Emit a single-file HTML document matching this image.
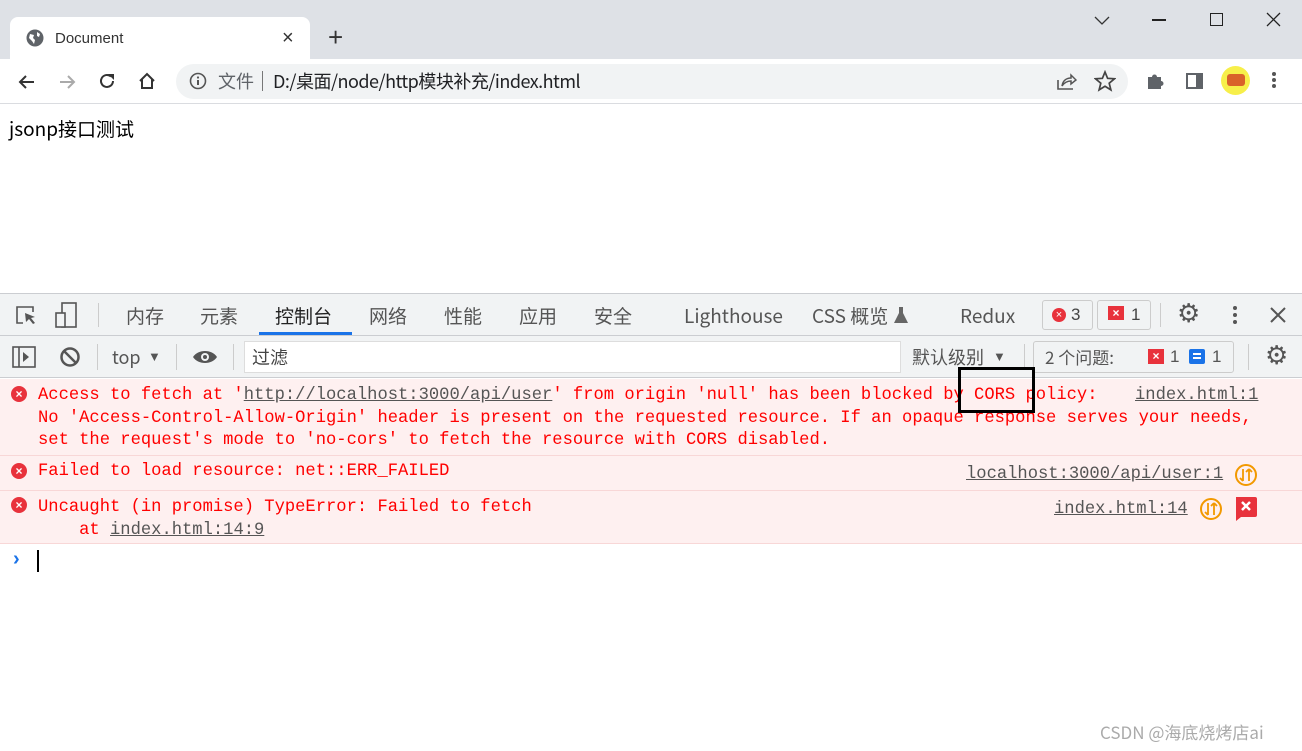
<!DOCTYPE html>
<html><head><meta charset="utf-8"><style>
*{margin:0;padding:0;box-sizing:border-box}
body{width:1302px;height:751px;overflow:hidden;background:#fff;font-family:"Liberation Sans","Noto Sans CJK SC",sans-serif;position:relative}
.abs{position:absolute}
.mono{font-family:"Liberation Mono","Noto Sans CJK SC",monospace;font-size:17.15px;white-space:pre}
.red{color:#f00}
.lnk{color:#555;text-decoration:underline}
.tab{position:absolute;top:303px;height:26px;line-height:26px;font-size:19px;color:#555;font-family:"Noto Sans CJK SC","Liberation Sans",sans-serif}
.tb{font-family:"Noto Sans CJK SC","Liberation Sans",sans-serif;line-height:26px}
</style></head><body>
<!-- title bar -->
<div class="abs" style="left:0;top:0;width:1302px;height:59px;background:#dee1e6"></div>
<div class="abs" style="left:10px;top:17px;width:300px;height:44px;background:#fff;border-radius:8px 8px 0 0"></div>
<svg class="abs" style="left:26px;top:29px" width="18" height="18" viewBox="0 0 18 18"><circle cx="9" cy="9" r="8.5" fill="#5f6368"/><path d="M4 5 L8 6 L7 9 L9 11 L8 15 L6 12 L3 9Z M11 3 L14 5 L13 8 L11 7Z" fill="#fff"/></svg>
<div class="abs" style="left:55px;top:30px;font-size:15px;color:#333">Document</div>
<div class="abs" style="left:282px;top:27px;font-size:20px;color:#333">×</div>
<div class="abs" style="left:328px;top:22px;font-size:26px;color:#333">+</div>
<svg class="abs" style="left:1094px;top:14px" width="16" height="12"><path d="M1 3 L8 10 L15 3" stroke="#333" fill="none" stroke-width="1.3"/></svg>
<div class="abs" style="left:1152px;top:19px;width:14px;height:1.5px;background:#222"></div>
<div class="abs" style="left:1210px;top:13px;width:13px;height:13px;border:1.5px solid #222"></div>
<svg class="abs" style="left:1266px;top:12px" width="15" height="15"><path d="M1 1L14 14M14 1L1 14" stroke="#222" stroke-width="1.3"/></svg>
<!-- toolbar -->
<div class="abs" style="left:0;top:59px;width:1302px;height:45px;background:#fff;border-bottom:1px solid #dadce0"></div>
<svg class="abs" style="left:17px;top:72px" width="20" height="20"><path d="M17 10H3M9 4L3 10L9 16" stroke="#333" stroke-width="2" fill="none"/></svg>
<svg class="abs" style="left:57px;top:72px" width="20" height="20"><path d="M3 10H17M11 4L17 10L11 16" stroke="#aaa" stroke-width="2" fill="none"/></svg>
<svg class="abs" style="left:97px;top:71px" width="20" height="20"><path d="M16 10A6 6 0 1 1 14 5.5" stroke="#333" stroke-width="2" fill="none"/><path d="M11 3H17V9Z" fill="#333"/></svg>
<svg class="abs" style="left:137px;top:71px" width="20" height="20"><path d="M3 10L10 3L17 10M5 8V17H15V8" stroke="#333" stroke-width="2" fill="none"/></svg>
<div class="abs" style="left:176px;top:64px;width:952px;height:35px;background:#f1f3f4;border-radius:18px"></div>
<svg class="abs" style="left:189px;top:72px" width="18" height="18"><circle cx="9" cy="9" r="7.5" stroke="#555" stroke-width="1.6" fill="none"/><path d="M9 8V13" stroke="#555" stroke-width="2"/><circle cx="9" cy="5.5" r="1.1" fill="#555"/></svg>
<div class="abs tb" style="left:218px;top:68px;font-size:18px;color:#5f6368">文件</div>
<div class="abs" style="left:262px;top:71px;width:1px;height:20px;background:#777"></div>
<div class="abs tb" style="left:273px;top:68px;font-size:18px;color:#202124;letter-spacing:-0.5px">D:/桌面/node/http模块补充/index.html</div>
<svg class="abs" style="left:1055px;top:71px" width="22" height="20"><path d="M3 9V18H18" stroke="#555" stroke-width="1.6" fill="none"/><path d="M7 15C8 9 12 7 16 7V4L21 9L16 13V10C12 10 9 12 7 15Z" stroke="#555" stroke-width="1.5" fill="none"/></svg>
<svg class="abs" style="left:1094px;top:70px" width="22" height="22"><path d="M11 2L13.6 8.3L20.5 8.8L15.2 13.2L16.9 19.9L11 16.3L5.1 19.9L6.8 13.2L1.5 8.8L8.4 8.3Z" stroke="#444" stroke-width="1.7" fill="none"/></svg>
<svg class="abs" style="left:1145px;top:71px" width="20" height="20"><path d="M3 6H7A2.5 2.5 0 0 1 12 6H16V10A2.5 2.5 0 0 1 16 15V18H3Z" fill="#5f6368"/></svg>
<div class="abs" style="left:1186px;top:73px;width:17px;height:16px;border:2px solid #5f6368;border-right:7px solid #5f6368"></div>
<div class="abs" style="left:1221px;top:66px;width:29px;height:29px;border-radius:50%;background:#f7ef4a"></div>
<div class="abs" style="left:1227px;top:74px;width:18px;height:12px;background:#d9622a;border-radius:3px"></div>
<div class="abs" style="left:1272px;top:72px;width:4px;height:4px;border-radius:2px;background:#555;box-shadow:0 6px 0 #555,0 12px 0 #555"></div>
<!-- page -->
<div class="abs tb" style="left:9px;top:116px;font-size:19px;color:#000">jsonp接口测试</div>
<!-- devtools tabs -->
<div class="abs" style="left:0;top:293px;width:1302px;height:43px;background:#f1f3f4;border-top:1px solid #cbcdd1;border-bottom:1px solid #cbcdd1"></div>
<svg class="abs" style="left:14px;top:303px" width="24" height="24"><path d="M9 20H3V4H19V9" stroke="#555" stroke-width="1.6" fill="none"/><path d="M11 10L21 14L17 15L21 20L19 21L15 16L12 19Z" fill="#555"/></svg>
<svg class="abs" style="left:54px;top:301px" width="26" height="28"><rect x="8" y="2" width="14" height="24" stroke="#555" stroke-width="1.6" fill="none"/><rect x="2" y="12" width="9" height="14" stroke="#555" stroke-width="1.6" fill="#f1f3f4"/></svg>
<div class="abs" style="left:98px;top:303px;width:1px;height:24px;background:#ccc"></div>
<div class="tab" style="left:126px">内存</div>
<div class="tab" style="left:200px">元素</div>
<div class="tab" style="left:275px;color:#222">控制台</div>
<div class="abs" style="left:259px;top:332px;width:93px;height:3px;background:#1a73e8"></div>
<div class="tab" style="left:369px">网络</div>
<div class="tab" style="left:444px">性能</div>
<div class="tab" style="left:519px">应用</div>
<div class="tab" style="left:594px">安全</div>
<div class="tab" style="left:684px">Lighthouse</div>
<div class="tab" style="left:812px">CSS 概览</div>
<svg class="abs" style="left:893px;top:306px" width="16" height="18"><path d="M5 1H11M6 1V7L1 17H15L10 7V1" fill="#666"/></svg>
<div class="tab" style="left:960px">Redux</div>
<div class="abs" style="left:1042px;top:300px;width:51px;height:30px;border:1px solid #ccc;border-radius:3px"></div>
<div class="abs" style="left:1052px;top:308px;width:14px;height:14px;border-radius:50%;background:#e8323c;color:#fff;font-size:11px;text-align:center;line-height:14px">×</div>
<div class="abs" style="left:1071px;top:305px;font-size:17px;color:#444">3</div>
<div class="abs" style="left:1097px;top:300px;width:54px;height:30px;border:1px solid #ccc;border-radius:3px"></div>
<div class="abs" style="left:1108px;top:306px;width:16px;height:14px;background:#e8323c;color:#fff;font-size:12px;text-align:center;line-height:14px;font-weight:bold">×</div>
<div class="abs" style="left:1131px;top:305px;font-size:17px;color:#444">1</div>
<div class="abs" style="left:1160px;top:303px;width:1px;height:24px;background:#ccc"></div>
<div class="abs" style="left:1177px;top:298px;font-size:26px;color:#555">⚙</div>
<div class="abs" style="left:1233px;top:306px;width:4px;height:4px;border-radius:2px;background:#555;box-shadow:0 7px 0 #555,0 14px 0 #555"></div>
<svg class="abs" style="left:1269px;top:306px" width="18" height="18"><path d="M2 2L16 16M16 2L2 16" stroke="#555" stroke-width="2"/></svg>
<!-- console toolbar -->
<div class="abs" style="left:0;top:336px;width:1302px;height:42px;background:#f1f3f4;border-bottom:1px solid #cbcdd1"></div>
<svg class="abs" style="left:12px;top:346px" width="24" height="22"><rect x="1" y="1" width="22" height="20" stroke="#555" stroke-width="1.6" fill="none"/><path d="M7 1V21" stroke="#555" stroke-width="1.6"/><path d="M11 6L17 11L11 16Z" fill="#555"/></svg>
<svg class="abs" style="left:59px;top:346px" width="22" height="22"><circle cx="11" cy="11" r="8.5" stroke="#555" stroke-width="2.5" fill="none"/><path d="M5 5L17 17" stroke="#555" stroke-width="2.5"/></svg>
<div class="abs" style="left:97px;top:344px;width:1px;height:26px;background:#ccc"></div>
<div class="abs tb" style="left:112px;top:344px;font-size:18px;color:#555">top</div>
<div class="abs" style="left:148px;top:349px;font-size:13px;color:#555">▼</div>
<div class="abs" style="left:176px;top:344px;width:1px;height:26px;background:#ccc"></div>
<svg class="abs" style="left:192px;top:347px" width="26" height="20"><path d="M1 10C6 2 20 2 25 10C20 18 6 18 1 10Z" fill="#555"/><circle cx="13" cy="10" r="4" fill="#f1f3f4"/><circle cx="13" cy="10" r="2" fill="#555"/></svg>
<div class="abs" style="left:233px;top:344px;width:1px;height:26px;background:#ccc"></div>
<div class="abs" style="left:244px;top:341px;width:657px;height:32px;background:#fff;border:1px solid #ddd"></div>
<div class="abs tb" style="left:252px;top:344px;font-size:18px;color:#444">过滤</div>
<div class="abs tb" style="left:912px;top:344px;font-size:18px;color:#555">默认级别</div>
<div class="abs" style="left:993px;top:349px;font-size:13px;color:#555">▼</div>
<div class="abs" style="left:1024px;top:344px;width:1px;height:26px;background:#ccc"></div>
<div class="abs" style="left:1033px;top:341px;width:201px;height:32px;border:1px solid #ccc;border-radius:3px"></div>
<div class="abs tb" style="left:1045px;top:344px;font-size:17px;color:#555">2 个问题:</div>
<div class="abs" style="left:1148px;top:349px;width:16px;height:15px;background:#e8323c;color:#fff;font-size:12px;text-align:center;line-height:15px;font-weight:bold">×</div>
<div class="abs" style="left:1170px;top:347px;font-size:17px;color:#555">1</div>
<div class="abs" style="left:1189px;top:349px;width:16px;height:15px;background:#1a73e8;border-radius:2px"></div>
<div class="abs" style="left:1193px;top:353px;width:8px;height:2px;background:#fff;box-shadow:0 4px 0 #fff"></div>
<div class="abs" style="left:1212px;top:347px;font-size:17px;color:#555">1</div>
<div class="abs" style="left:1248px;top:344px;width:1px;height:26px;background:#ccc"></div>
<div class="abs" style="left:1265px;top:340px;font-size:26px;color:#555">⚙</div>
<!-- messages -->
<div class="abs" style="left:0;top:379px;width:1302px;height:164px;background:#fef0f0"></div>
<div class="abs" style="left:0;top:455px;width:1302px;height:1px;background:#f8d7d7"></div>
<div class="abs" style="left:0;top:490px;width:1302px;height:1px;background:#f8d7d7"></div>
<div class="abs" style="left:0;top:543px;width:1302px;height:1px;background:#f8d7d7"></div>
<div class="abs" style="left:11px;top:386px;width:16px;height:16px;border-radius:50%;background:#e8323c;color:#fff;font-size:12px;text-align:center;line-height:16px;font-weight:bold">×</div>
<div class="abs" style="left:11px;top:463px;width:16px;height:16px;border-radius:50%;background:#e8323c;color:#fff;font-size:12px;text-align:center;line-height:16px;font-weight:bold">×</div>
<div class="abs" style="left:11px;top:497px;width:16px;height:16px;border-radius:50%;background:#e8323c;color:#fff;font-size:12px;text-align:center;line-height:16px;font-weight:bold">×</div>
<div class="abs mono red" style="left:38px;top:385px;line-height:22.5px">Access to fetch at '<span class="lnk">http://localhost:3000/api/user</span>' from origin 'null' has been blocked by CORS policy:
No 'Access-Control-Allow-Origin' header is present on the requested resource. If an opaque response serves your needs,
set the request's mode to 'no-cors' to fetch the resource with CORS disabled.</div>
<div class="abs mono lnk" style="left:1135px;top:386px">index.html:1</div>
<div class="abs mono red" style="left:38px;top:462px">Failed to load resource: net::ERR_FAILED</div>
<div class="abs mono lnk" style="left:966px;top:465px">localhost:3000/api/user:1</div>
<div class="abs mono red" style="left:38px;top:497px;line-height:22.5px">Uncaught (in promise) TypeError: Failed to fetch
    at <span class="lnk">index.html:14:9</span></div>
<div class="abs mono lnk" style="left:1054px;top:500px">index.html:14</div>
<svg class="abs" style="left:1234px;top:463px" width="24" height="24"><circle cx="12" cy="12" r="10" stroke="#f29900" stroke-width="2" fill="none"/><path d="M9 6V18M6 15L9 18M15 18V6M12 9L15 6M18 9L15 6" stroke="#f29900" stroke-width="1.8" fill="none"/></svg>
<svg class="abs" style="left:1199px;top:497px" width="24" height="24"><circle cx="12" cy="12" r="10" stroke="#f29900" stroke-width="2" fill="none"/><path d="M9 6V18M6 15L9 18M15 18V6M12 9L15 6M18 9L15 6" stroke="#f29900" stroke-width="1.8" fill="none"/></svg>
<svg class="abs" style="left:1234px;top:497px" width="23" height="24"><path d="M2 0H21Q23 0 23 2V18Q23 20 21 20H7L2 24Z" fill="#e8323c"/><path d="M8 5L16 13M16 5L8 13" stroke="#fff" stroke-width="2.5"/></svg>
<div class="abs" style="left:958px;top:367px;width:77px;height:46px;border:3px solid #000"></div>
<div class="abs" style="left:13px;top:548px;font-size:20px;color:#1a73e8;font-weight:bold">›</div>
<div class="abs" style="left:37px;top:550px;width:1.5px;height:22px;background:#000"></div>
<div class="abs tb" style="left:1100px;top:719px;font-size:17px;color:#aaa">CSDN @海底烧烤店ai</div>
</body></html>
